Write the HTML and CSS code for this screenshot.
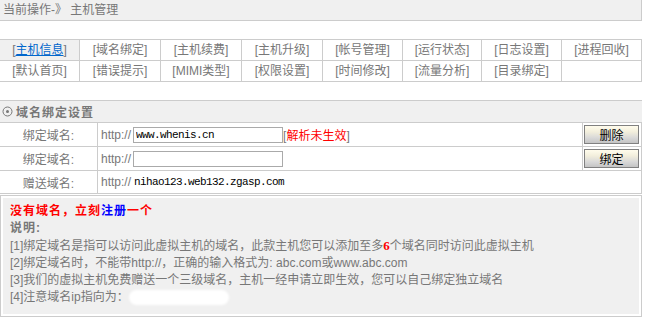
FILE: index.html
```html
<!DOCTYPE html>
<html>
    <head>
        <meta charset="utf-8">
        <title>主机管理</title>
        <link rel="stylesheet" href="styles.css">
    </head>
    <body>
        <div class="crumb">当前操作-》 主机管理</div>

        <div class="nav">
            <div class="nav-item is-current">[<a href="#">主机信息</a>]</div>
            <div class="nav-item">[域名绑定]</div>
            <div class="nav-item">[主机续费]</div>
            <div class="nav-item">[主机升级]</div>
            <div class="nav-item">[帐号管理]</div>
            <div class="nav-item">[运行状态]</div>
            <div class="nav-item">[日志设置]</div>
            <div class="nav-item">[进程回收]</div>
            <div class="nav-item">[默认首页]</div>
            <div class="nav-item">[错误提示]</div>
            <div class="nav-item">[MIMI类型]</div>
            <div class="nav-item">[权限设置]</div>
            <div class="nav-item">[时间修改]</div>
            <div class="nav-item">[流量分析]</div>
            <div class="nav-item">[目录绑定]</div>
            <div class="nav-item"></div>
        </div>

        <div class="bind">
            <div class="bind-head">
                <svg class="bind-icon" width="11" height="11" viewBox="0 0 11 11">
                    <circle cx="5.5" cy="5.5" r="4.5" fill="none" stroke="#777" stroke-width="1"/>
                    <circle cx="5.5" cy="5.5" r="1.5" fill="#777"/>
                </svg>
                域名绑定设置
            </div>
            <div class="bind-row">
                <div class="bind-label">绑定域名:</div>
                <div class="bind-value">http://<input class="bind-input" type="text" value="www.whenis.cn"><span class="bind-state">[<em>解析未生效</em>]</span></div>
                <div class="bind-action"><button class="btn">删除</button></div>
            </div>
            <div class="bind-row">
                <div class="bind-label">绑定域名:</div>
                <div class="bind-value">http://<input class="bind-input" type="text" value=""></div>
                <div class="bind-action"><button class="btn">绑定</button></div>
            </div>
            <div class="bind-row is-last">
                <div class="bind-label">赠送域名:</div>
                <div class="bind-value">http://<span class="bind-free">nihao123.web132.zgasp.com</span></div>
            </div>
        </div>

        <div class="notes">
            <div class="notes-body">
                <div class="warn">没有域名，立刻<a href="#">注册</a>一个</div>
                <div class="notes-title">说明:</div>
                <div>[1]绑定域名是指可以访问此虚拟主机的域名，此款主机您可以添加至多<b class="num">6</b>个域名同时访问此虚拟主机</div>
                <div>[2]绑定域名时，不能带http://，正确的输入格式为: abc.com或www.abc.com</div>
                <div>[3]我们的虚拟主机免费赠送一个三级域名，主机一经申请立即生效，您可以自己绑定独立域名</div>
                <div>[4]注意域名ip指向为：<span class="mask"></span></div>
            </div>
        </div>
    </body>
</html>
```

FILE: styles.css
```css
body {
    margin: 0;
    background: #fff;
    color: #777;
    font-size: 12px;
    font-family: "Liberation Sans", "Noto Sans CJK SC", sans-serif;
}

.crumb {
    width: 642px;
    height: 21px;
    box-sizing: border-box;
    padding-left: 3px;
    line-height: 20px;
    background: #f0f0f0;
    border-bottom: 1px solid #ccc;
    border-right: 1px solid #ccc;
}

/* top menu */
.nav {
    width: 642px;
    margin-top: 18px;
    display: grid;
    grid-template-columns: 80px 81px 81px 81px 80px 79px 80px 80px;
    border-top: 1px solid #ccc;
}
.nav-item {
    height: 21px;
    box-sizing: border-box;
    line-height: 20px;
    text-align: center;
    border-right: 1px solid #ccc;
    border-bottom: 1px solid #ccc;
}
.nav-item.is-current {
    background: #f0f0f0;
}
.nav-item a {
    color: #0066cc;
    text-decoration: underline;
}

/* domain binding */
.bind {
    width: 642px;
    margin-top: 18px;
    border-top: 1px solid #ccc;
}
.bind-head {
    height: 22px;
    box-sizing: border-box;
    padding-left: 2px;
    display: flex;
    align-items: center;
    gap: 3px;
    background: #f0f0f0;
    border-bottom: 1px solid #ccc;
    font-weight: bold;
    letter-spacing: 1px;
}
.bind-row {
    display: grid;
    grid-template-columns: 98px 485px 59px;
    height: 24px;
}
.bind-row.is-last {
    grid-template-columns: 98px 544px;
    height: 23px;
}
.bind-row > div {
    display: flex;
    align-items: center;
    border-right: 1px solid #ccc;
    border-bottom: 1px solid #ccc;
}
.bind-label {
    justify-content: center;
}
.bind-value {
    padding-left: 3px;
}
.bind-action {
    padding-left: 1px;
}
.bind-input {
    width: 150px;
    height: 16px;
    box-sizing: border-box;
    margin: 0 0 0 2px;
    padding: 0 2px;
    border: 1px solid #aaa;
    color: #000;
    font-size: 11px;
    letter-spacing: -0.6px;
    font-family: "Liberation Mono", monospace;
}
.bind-state em {
    color: #f00;
    font-style: normal;
}
.bind-free {
    margin-left: 3px;
    color: #000;
    font-size: 11px;
    letter-spacing: -0.6px;
    font-family: "Liberation Mono", monospace;
}
.btn {
    width: 55px;
    height: 19px;
    padding: 0;
    border: 1px solid #808080;
    background: linear-gradient(#fffcec, #f2eedc 35%, #d8d8d8 70%, #c4c4c4);
    color: #000;
    font-size: 12px;
    font-family: "Liberation Sans", "Noto Sans CJK SC", sans-serif;
}

/* help box */
.notes {
    width: 642px;
    box-sizing: border-box;
    margin-top: 1px;
    padding: 2px;
    border: 1px solid #ccc;
}
.notes-body {
    height: 116px;
    box-sizing: border-box;
    padding: 5px 7px 9px;
    line-height: 17px;
    background: #f0f0f0;
}
.warn {
    color: #f00;
    font-weight: bold;
    letter-spacing: 1px;
}
.warn a {
    color: #00f;
    text-decoration: none;
}
.notes-title {
    font-weight: bold;
    letter-spacing: 1px;
}
.num {
    color: #f00;
    font-size: 13px;
    font-family: "Liberation Serif", serif;
}
.mask {
    display: inline-block;
    width: 100px;
    height: 15px;
    vertical-align: middle;
    border-radius: 8px;
    background: #fff;
    filter: blur(1px);
}
```
